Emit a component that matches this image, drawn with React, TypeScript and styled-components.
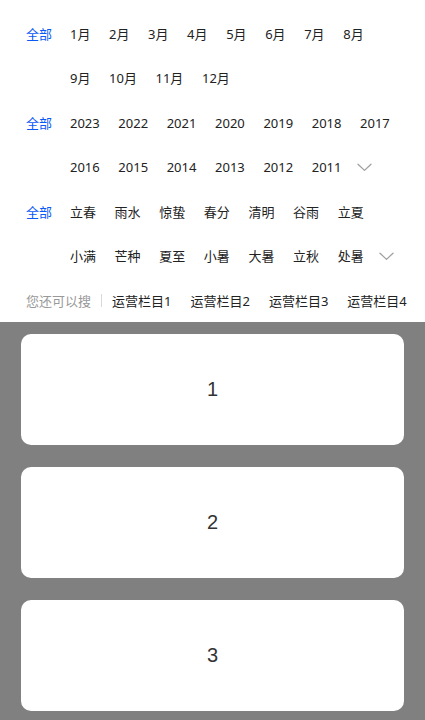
import { createGlobalStyle } from "styled-components";
import styled from "styled-components";

const GlobalStyle = createGlobalStyle`
  html, body {
    margin: 0;
    padding: 0;
    background-color: #808080;
  }

  body {
    font-family: "Noto Sans", "Noto Sans CJK SC", sans-serif;
    -webkit-font-smoothing: antialiased;
  }
`;

const Page = styled.div`
  min-height: 720px;
  background-color: #808080;
`;

const FilterPanel = styled.section`
  background-color: #ffffff;
  padding: 12px 28px 0 26px;
`;

const FilterRow = styled.div`
  display: flex;
  align-items: flex-start;
`;

const AllLabel = styled.span`
  flex-shrink: 0;
  width: 44px;
  line-height: 44.4px;
  font-size: 13px;
  color: #0a59f7;
`;

const Options = styled.div`
  flex: 1;
  display: flex;
  flex-wrap: wrap;
  align-items: center;
  column-gap: 18.6px;
`;

const Option = styled.span`
  line-height: 44.4px;
  font-size: 13px;
  color: #222222;
  white-space: nowrap;
`;

const MoreToggle = styled.span`
  display: flex;
  align-items: center;
  height: 44.4px;
  margin-left: -3px;
`;

const SearchRow = styled.div`
  display: flex;
  align-items: center;
  height: 44px;
  white-space: nowrap;
  overflow: hidden;
  margin-right: -28px;
`;

const SearchHint = styled.span`
  font-size: 13px;
  color: #999999;
`;

const Divider = styled.span`
  flex-shrink: 0;
  width: 1px;
  height: 13px;
  margin: 0 10px;
  background-color: #d8d8d8;
`;

const SearchLinks = styled.div`
  display: flex;
  gap: 19px;
`;

const SearchLink = styled.span`
  font-size: 13px;
  color: #222222;
`;

const CardList = styled.div`
  display: flex;
  flex-direction: column;
  gap: 22.4px;
  padding: 12px 21px;
`;

const Card = styled.div`
  height: 110.6px;
  border-radius: 10px;
  background-color: #ffffff;
  display: flex;
  align-items: center;
  justify-content: center;
  font-family: "Liberation Sans", Arial, sans-serif;
  font-size: 20px;
  color: #333333;
`;

const Chevron = () => (
  <svg width="15" height="9" viewBox="0 0 15 9" fill="none">
    <polyline
      points="1,1.2 7.5,7.4 14,1.2"
      stroke="#a0a0a0"
      strokeWidth="1.3"
      strokeLinecap="round"
      strokeLinejoin="round"
    />
  </svg>
);

const months = ["1月", "2月", "3月", "4月", "5月", "6月", "7月", "8月", "9月", "10月", "11月", "12月"];
const years = Array.from({ length: 13 }, (_, i) => String(2023 - i));
const solarTerms = ["立春", "雨水", "惊蛰", "春分", "清明", "谷雨", "立夏", "小满", "芒种", "夏至", "小暑", "大暑", "立秋", "处暑"];
const links = ["运营栏目1", "运营栏目2", "运营栏目3", "运营栏目4"];

type FilterProps = {
  items: string[];
  collapsible?: boolean;
};

const Filter = ({ items, collapsible }: FilterProps) => (
  <FilterRow>
    <AllLabel>全部</AllLabel>
    <Options>
      {items.map((item) => (
        <Option key={item}>{item}</Option>
      ))}
      {collapsible && (
        <MoreToggle>
          <Chevron />
        </MoreToggle>
      )}
    </Options>
  </FilterRow>
);

export default function App() {
  return (
    <Page>
      <GlobalStyle />
      <FilterPanel>
        <Filter items={months} />
        <Filter items={years} collapsible />
        <Filter items={solarTerms} collapsible />
        <SearchRow>
          <SearchHint>您还可以搜</SearchHint>
          <Divider />
          <SearchLinks>
            {links.map((link) => (
              <SearchLink key={link}>{link}</SearchLink>
            ))}
          </SearchLinks>
        </SearchRow>
      </FilterPanel>
      <CardList>
        {[1, 2, 3].map((n) => (
          <Card key={n}>{n}</Card>
        ))}
      </CardList>
    </Page>
  );
}
